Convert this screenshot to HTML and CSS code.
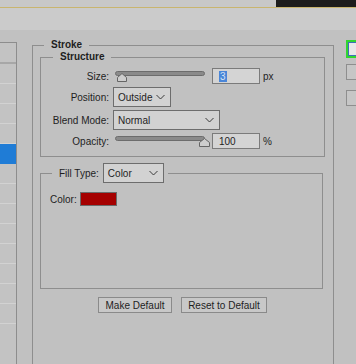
FILE: index.html
```html
<!DOCTYPE html>
<html lang="en">
<head>
    <meta charset="UTF-8">
    <title>Layer Style - Stroke</title>
    <link rel="stylesheet" href="styles.css">
</head>
<body>
    <div class="titlebar">
        <div class="titlebar-left"></div>
        <div class="titlebar-dark"></div>
    </div>
    <div class="optionsbar"></div>

    <div class="workspace">
        <div class="styles-list">
            <div class="style-row head"></div>
            <div class="style-row"></div>
            <div class="style-row"></div>
            <div class="style-row"></div>
            <div class="style-row"></div>
            <div class="style-row active"></div>
            <div class="style-row"></div>
            <div class="style-row"></div>
            <div class="style-row"></div>
            <div class="style-row"></div>
            <div class="style-row"></div>
            <div class="style-row"></div>
            <div class="style-row"></div>
            <div class="style-row"></div>
        </div>

        <fieldset class="group stroke">
            <legend class="group-title stroke-title">Stroke</legend>

            <fieldset class="group structure">
                <legend class="group-title structure-title">Structure</legend>
                <div class="structure-grid">
                    <span class="field-label">Size:</span>
                    <div class="field-control">
                        <div class="slider">
                            <div class="slider-track"></div>
                            <svg class="slider-thumb thumb-min" width="10" height="9" viewBox="0 0 10 9">
                                <polygon points="0.5,8.5 0.5,4.5 5,0.5 9.5,4.5 9.5,8.5" fill="#cdcdcd" stroke="#656565"/>
                            </svg>
                        </div>
                        <div class="num-input"><span class="selected">3</span></div>
                        <span class="unit">px</span>
                    </div>

                    <span class="field-label">Position:</span>
                    <div class="field-control">
                        <div class="dropdown position-select">
                            <span>Outside</span>
                            <svg width="9" height="6" viewBox="0 0 9 6"><polyline points="0.5,1 4.5,5 8.5,1" fill="none" stroke="#3a3a3a"/></svg>
                        </div>
                    </div>

                    <span class="field-label">Blend Mode:</span>
                    <div class="field-control">
                        <div class="dropdown blend-select">
                            <span>Normal</span>
                            <svg width="9" height="6" viewBox="0 0 9 6"><polyline points="0.5,1 4.5,5 8.5,1" fill="none" stroke="#3a3a3a"/></svg>
                        </div>
                    </div>

                    <span class="field-label">Opacity:</span>
                    <div class="field-control">
                        <div class="slider">
                            <div class="slider-track"></div>
                            <svg class="slider-thumb thumb-max" width="11" height="9" viewBox="0 0 11 9">
                                <polygon points="0.5,8.5 0.5,4.5 5.5,0.5 10.5,4.5 10.5,8.5" fill="#cdcdcd" stroke="#656565"/>
                            </svg>
                        </div>
                        <div class="num-input">100</div>
                        <span class="unit">%</span>
                    </div>
                </div>
            </fieldset>

            <fieldset class="group fill">
                <legend class="fill-title">
                    <span class="fill-type">
                        <span>Fill Type:</span>
                        <span class="dropdown fill-select">
                            <span>Color</span>
                            <svg width="9" height="6" viewBox="0 0 9 6"><polyline points="0.5,1 4.5,5 8.5,1" fill="none" stroke="#3a3a3a"/></svg>
                        </span>
                    </span>
                </legend>
                <div class="color-row">
                    <span>Color:</span>
                    <div class="swatch"></div>
                </div>
            </fieldset>

            <div class="button-row">
                <button class="flat-button make-default">Make Default</button>
                <button class="flat-button reset-default">Reset to Default</button>
            </div>
        </fieldset>

        <div class="side-buttons">
            <div class="side-button focused"></div>
            <div class="side-button second"></div>
            <div class="side-button third"></div>
        </div>
    </div>
</body>
</html>
```

FILE: styles.css
```css
body {
    margin: 0;
    width: 356px;
    height: 364px;
    overflow: hidden;
    background-color: #c1c1c1;
    color: #1e1e1e;
    font-family: "Liberation Sans", Arial, sans-serif;
    font-size: 10px;
}
.titlebar {
    display: flex;
    height: 7px;
    border-bottom: 1px solid #c9b56f;
}
.titlebar-left {
    flex: 1;
    background-color: #c8c8c8;
}
.titlebar-dark {
    width: 80px;
    background-color: #1d1d1d;
}
.optionsbar {
    height: 22px;
    background-color: #cbcbcb;
}
.workspace {
    display: flex;
    align-items: flex-start;
    padding-top: 9px;
}
.styles-list {
    flex-shrink: 0;
    width: 16px;
    height: 321px;
    margin-top: 3px;
    overflow: hidden;
    border-top: 1px solid #8d8d8d;
    border-right: 1px solid #8d8d8d;
    background-color: #c3c3c3;
}
.style-row {
    height: 19px;
    border-bottom: 1px solid #d2d2d2;
}
.style-row.head {
    height: 19px;
    border-bottom: 2px solid #a7a7a7;
}
.style-row.active {
    background-color: #1f7cd6;
    border-bottom-color: #1f7cd6;
}
.group {
    margin: 0;
    border: 1px solid #8e8e8e;
}
.group-title {
    padding: 0 7px;
    font-weight: bold;
    line-height: 12px;
}
.stroke {
    flex-shrink: 0;
    box-sizing: border-box;
    width: 302px;
    height: 325px;
    margin-left: 15px;
    padding: 0 8px 0 7px;
    border-bottom: none;
}
.stroke-title {
    margin-left: 4px;
}
.structure {
    padding: 0 0 7px 0;
}
.structure-title {
    margin-left: 12px;
}
.structure-grid {
    display: grid;
    grid-template-columns: 68px auto;
    column-gap: 4px;
    row-gap: 3px;
    align-items: center;
    padding-top: 5px;
}
.field-label {
    text-align: right;
}
.field-control {
    display: flex;
    align-items: center;
}
.slider {
    position: relative;
    width: 90px;
    height: 16px;
    margin-left: 2px;
}
.slider-track {
    box-sizing: border-box;
    height: 5px;
    margin-top: 3px;
    border: 1px solid #6c6c6c;
    border-radius: 3px;
    background-color: #8a8a8a;
}
.slider-thumb {
    position: absolute;
    top: 5px;
    display: block;
}
.thumb-min {
    left: 2px;
}
.thumb-max {
    left: 84px;
}
.num-input {
    box-sizing: border-box;
    width: 48px;
    height: 16px;
    margin-left: 7px;
    padding: 0 6px;
    border: 1px solid #7b7b7b;
    background-color: #d4d4d4;
    display: flex;
    align-items: center;
}
.num-input .selected {
    background-color: #4a86d8;
    color: #d6e2f2;
    line-height: 11px;
    padding: 0 1px;
}
.unit {
    margin-left: 3px;
}
.dropdown {
    box-sizing: border-box;
    height: 20px;
    padding: 0 5px 0 4px;
    border: 1px solid #6d6d6d;
    background-color: #d2d2d2;
    display: flex;
    align-items: center;
    justify-content: space-between;
}
.position-select {
    width: 58px;
}
.blend-select {
    width: 107px;
}
.fill {
    box-sizing: border-box;
    height: 126px;
    margin: 6px 2px 0 0;
    padding: 0 0 0 9px;
}
.fill-title {
    margin-left: 2px;
    padding: 0 4px 0 7px;
}
.fill-type {
    display: flex;
    align-items: center;
    gap: 4px;
}
.fill-select {
    width: 61px;
}
.color-row {
    display: flex;
    align-items: center;
    gap: 3px;
    margin-top: 9px;
}
.swatch {
    box-sizing: border-box;
    width: 37px;
    height: 14px;
    border: 1px solid #6a6a6a;
    background-color: #a50000;
}
.button-row {
    display: flex;
    justify-content: center;
    gap: 9px;
    margin-top: 8px;
}
.flat-button {
    box-sizing: border-box;
    height: 16px;
    padding: 0;
    border: 1px solid #8a8a8a;
    background-color: #c8c8c8;
    color: #1e1e1e;
    font-family: inherit;
    font-size: 10px;
}
.make-default {
    width: 74px;
}
.reset-default {
    width: 86px;
}
.side-buttons {
    flex-shrink: 0;
    display: flex;
    flex-direction: column;
    margin-left: 12px;
    margin-top: 1px;
}
.side-button {
    box-sizing: border-box;
    width: 10px;
    height: 16px;
    border: 1px solid #8e8e8e;
    border-right: none;
    background-color: #c6c6c6;
}
.side-button.focused {
    height: 18px;
    border: 2px solid #31d431;
    border-right: none;
    background-color: #e8e8e8;
    box-shadow: inset 1px 1px 0 0 #3d6fb8, inset 0 -1px 0 0 #3d6fb8;
}
.side-button.second {
    margin-top: 6px;
}
.side-button.third {
    margin-top: 10px;
}
```
